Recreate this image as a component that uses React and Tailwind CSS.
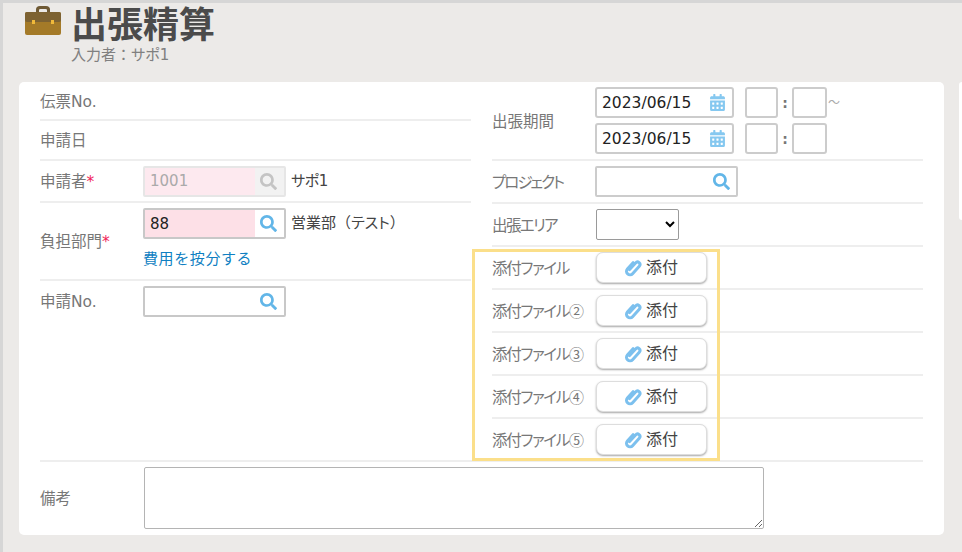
import { FaSearch, FaCalendarAlt } from 'react-icons/fa';

const font = { fontFamily: '"DejaVu Sans", "Noto Sans CJK JP", sans-serif' };

const Briefcase = () => (
  <svg width="36" height="32" viewBox="0 0 36 32">
    <path d="M11 9V5.500Q11 2 15 2h6q4 0 4 3.500V9h-3V6q0-1-1.500-1h-5Q14 5 14 6v3z" fill="#6f5a35" />
    <rect x="0" y="8" width="36" height="23" rx="2" fill="#a47a28" />
    <rect x="0" y="8" width="36" height="10" rx="2" fill="#7d6232" />
    <rect x="7" y="16" width="3" height="4" fill="#f0b93a" />
    <rect x="26" y="16" width="3" height="4" fill="#f0b93a" />
  </svg>
);

const Clip = () => (
  <svg width="16" height="18" viewBox="0 0 16 18" fill="none" stroke="#7cc0ee" strokeWidth="3" strokeLinecap="round" className="overflow-visible">
    <path d="M4.500 5v8.500a3.500 3.500 0 0 0 7 0V3.500a2.500 2.500 0 0 0-5 0v9" transform="rotate(42 8 9)" />
  </svg>
);

const Row = ({ className = '', children }) => (
  <div className={`flex items-center border-b-2 border-[#eeeeee] ${className}`}>{children}</div>
);

const Label = ({ children, required, className = '' }) => (
  <div className={`pt-[4px] text-[15.5px] text-[#777777] ${className}`}>
    {children}
    {required && <span className="text-[#f0245a]">*</span>}
  </div>
);

const LookupInput = ({ value, tint, disabled }) => (
  <div className={`flex h-[31px] w-[143px] rounded-[2px] border-2 ${disabled ? 'border-[#e6e6e6]' : 'border-[#c8c8c8]'}`}>
    <div className={`flex w-[110px] items-center pl-[5px] pt-[1px] text-[15px] ${tint} ${disabled ? 'text-[#aaaaaa]' : 'text-[#222222]'}`}>
      {value}
    </div>
    <div className={`flex flex-1 items-center justify-center pr-[2px] ${disabled ? 'bg-[#f2f2f2] text-[#c4c4c4]' : 'text-[#62b6e8]'}`}>
      <FaSearch size={17} />
    </div>
  </div>
);

const TimeBox = ({ className }) => (
  <div className={`h-[31px] rounded-[3px] border-2 border-[#cccccc] ${className}`} />
);

const DateRow = ({ tilde }) => (
  <div className="flex items-center">
    <div className="flex h-[31px] w-[139px] items-center justify-between rounded-[3px] border-2 border-[#cccccc] pl-[5px] pr-[6px] text-[15.5px] text-[#222222]">
      <span className="pt-[3px]">2023/06/15</span>
      <FaCalendarAlt size={17} className="text-[#85c8f0]" />
    </div>
    <TimeBox className="ml-[11px] w-[33px]" />
    <div className="w-[14px] text-center text-[14px] font-bold leading-none text-[#777777]">:</div>
    <TimeBox className="w-[35px]" />
    {tilde && <div className="ml-[1px] text-[12px] text-[#aaaaaa]">～</div>}
  </div>
);

const Attachment = ({ label, num, last }) => (
  <Row className={`h-[43px] ${last ? 'border-b-0' : ''}`}>
    <div className="w-[104px]">
      <Label className="tracking-[-1.3px]">
        {label}
        {num && <span className="font-['Noto_Sans_CJK_JP'] text-[15px]">{num}</span>}
      </Label>
    </div>
    <button className="flex h-[31px] w-[111px] items-center justify-center gap-[5px] rounded-[7px] border border-[#dddddd] bg-white text-[16px] text-[#444444] shadow-[0_1px_2px_rgba(0,0,0,0.35)]">
      <Clip />
      添付
    </button>
  </Row>
);

export default function App() {
  return (
    <div className="h-[552px] w-[962px] overflow-hidden border-l-[3px] border-t-[3px] border-[#d6d6d6] bg-[#eceae8] [font-feature-settings:'palt']" style={font}>
      <div className="flex h-[79px] pl-[22px]">
        <div className="pt-[1px]">
          <Briefcase />
        </div>
        <div className="ml-[10px] pt-[4px]">
          <h1 className="text-[36px] font-bold leading-[38px] text-[#4b4b4b] [font-feature-settings:normal]">出張精算</h1>
          <p className="text-[15px] leading-[20px] text-[#808080]">
            入力者<span className="[font-feature-settings:normal]">：</span>サポ1
          </p>
        </div>
      </div>

      <div className="flex">
        <div className="ml-[16px] h-[453px] w-[925px] rounded-[5px] bg-white px-[21px]">
          <div className="flex h-[378px] gap-[21px]">
            <div className="w-[431px]">
              <Row className="h-[39px]"><Label>伝票No.</Label></Row>
              <Row className="h-[40px]"><Label>申請日</Label></Row>
              <Row className="h-[42px]">
                <div className="w-[103px]"><Label required>申請者</Label></div>
                <LookupInput value="1001" tint="bg-[#fde9ef]" disabled />
                <span className="ml-[5px] pt-[1px] text-[15px] tracking-[-0.4px] text-[#444444]">サポ1</span>
              </Row>
              <Row className="h-[78px]">
                <div className="w-[103px]"><Label required>負担部門</Label></div>
                <div className="mt-[5px] flex flex-col gap-[10px] self-start">
                  <div className="flex items-center">
                    <LookupInput value="88" tint="bg-[#fde0e7]" />
                    <span className="ml-[5px] text-[15px] text-[#444444]">
                      営業部<span className="[font-feature-settings:normal]">（</span>テスト<span className="[font-feature-settings:normal]">）</span>
                    </span>
                  </div>
                  <a className="text-[15px] leading-[20px] tracking-[0.6px] text-[#0f7fc2] [font-feature-settings:normal]">費用を按分する</a>
                </div>
              </Row>
              <div className="flex h-[40px] items-center">
                <div className="w-[103px]"><Label>申請No.</Label></div>
                <LookupInput value="" tint="bg-white" />
              </div>
            </div>

            <div className="relative w-[431px]">
              <Row className="h-[79px]">
                <div className="w-[103px]"><Label>出張期間</Label></div>
                <div className="flex flex-col gap-[5px]">
                  <DateRow tilde />
                  <DateRow />
                </div>
              </Row>
              <Row className="h-[43px]">
                <div className="w-[103px]"><Label className="tracking-[-2px]">プロジェクト</Label></div>
                <div className="flex h-[31px] w-[143px] items-center justify-end rounded-[2px] border-2 border-[#cccccc] pr-[6px] text-[#62b6e8]">
                  <FaSearch size={17} />
                </div>
              </Row>
              <Row className="h-[43px]">
                <div className="w-[104px]"><Label className="tracking-[-1.6px]">出張エリア</Label></div>
                <select className="h-[31px] w-[83px] rounded-[2px] border border-[#9a9a9a] bg-white" />
              </Row>
              <Attachment label="添付ファイル" />
              <Attachment label="添付ファイル" num="②" />
              <Attachment label="添付ファイル" num="③" />
              <Attachment label="添付ファイル" num="④" />
              <Attachment label="添付ファイル" num="⑤" last />
              {/* highlight drawn over the attachment rows */}
              <div className="pointer-events-none absolute left-[-20px] top-[167px] h-[212px] w-[248px] border-[3px] border-[#fbdf8a]" />
            </div>
          </div>

          <div className="flex h-[74px] items-center border-t-2 border-[#eeeeee]">
            <div className="w-[104px]"><Label>備考</Label></div>
            <textarea className="h-[62px] w-[620px] rounded-[2px] border border-[#b4b4b4]" />
          </div>
        </div>
        <div className="ml-[15px] h-[138px] flex-1 rounded-l-[5px] bg-white" />
      </div>
    </div>
  );
}
